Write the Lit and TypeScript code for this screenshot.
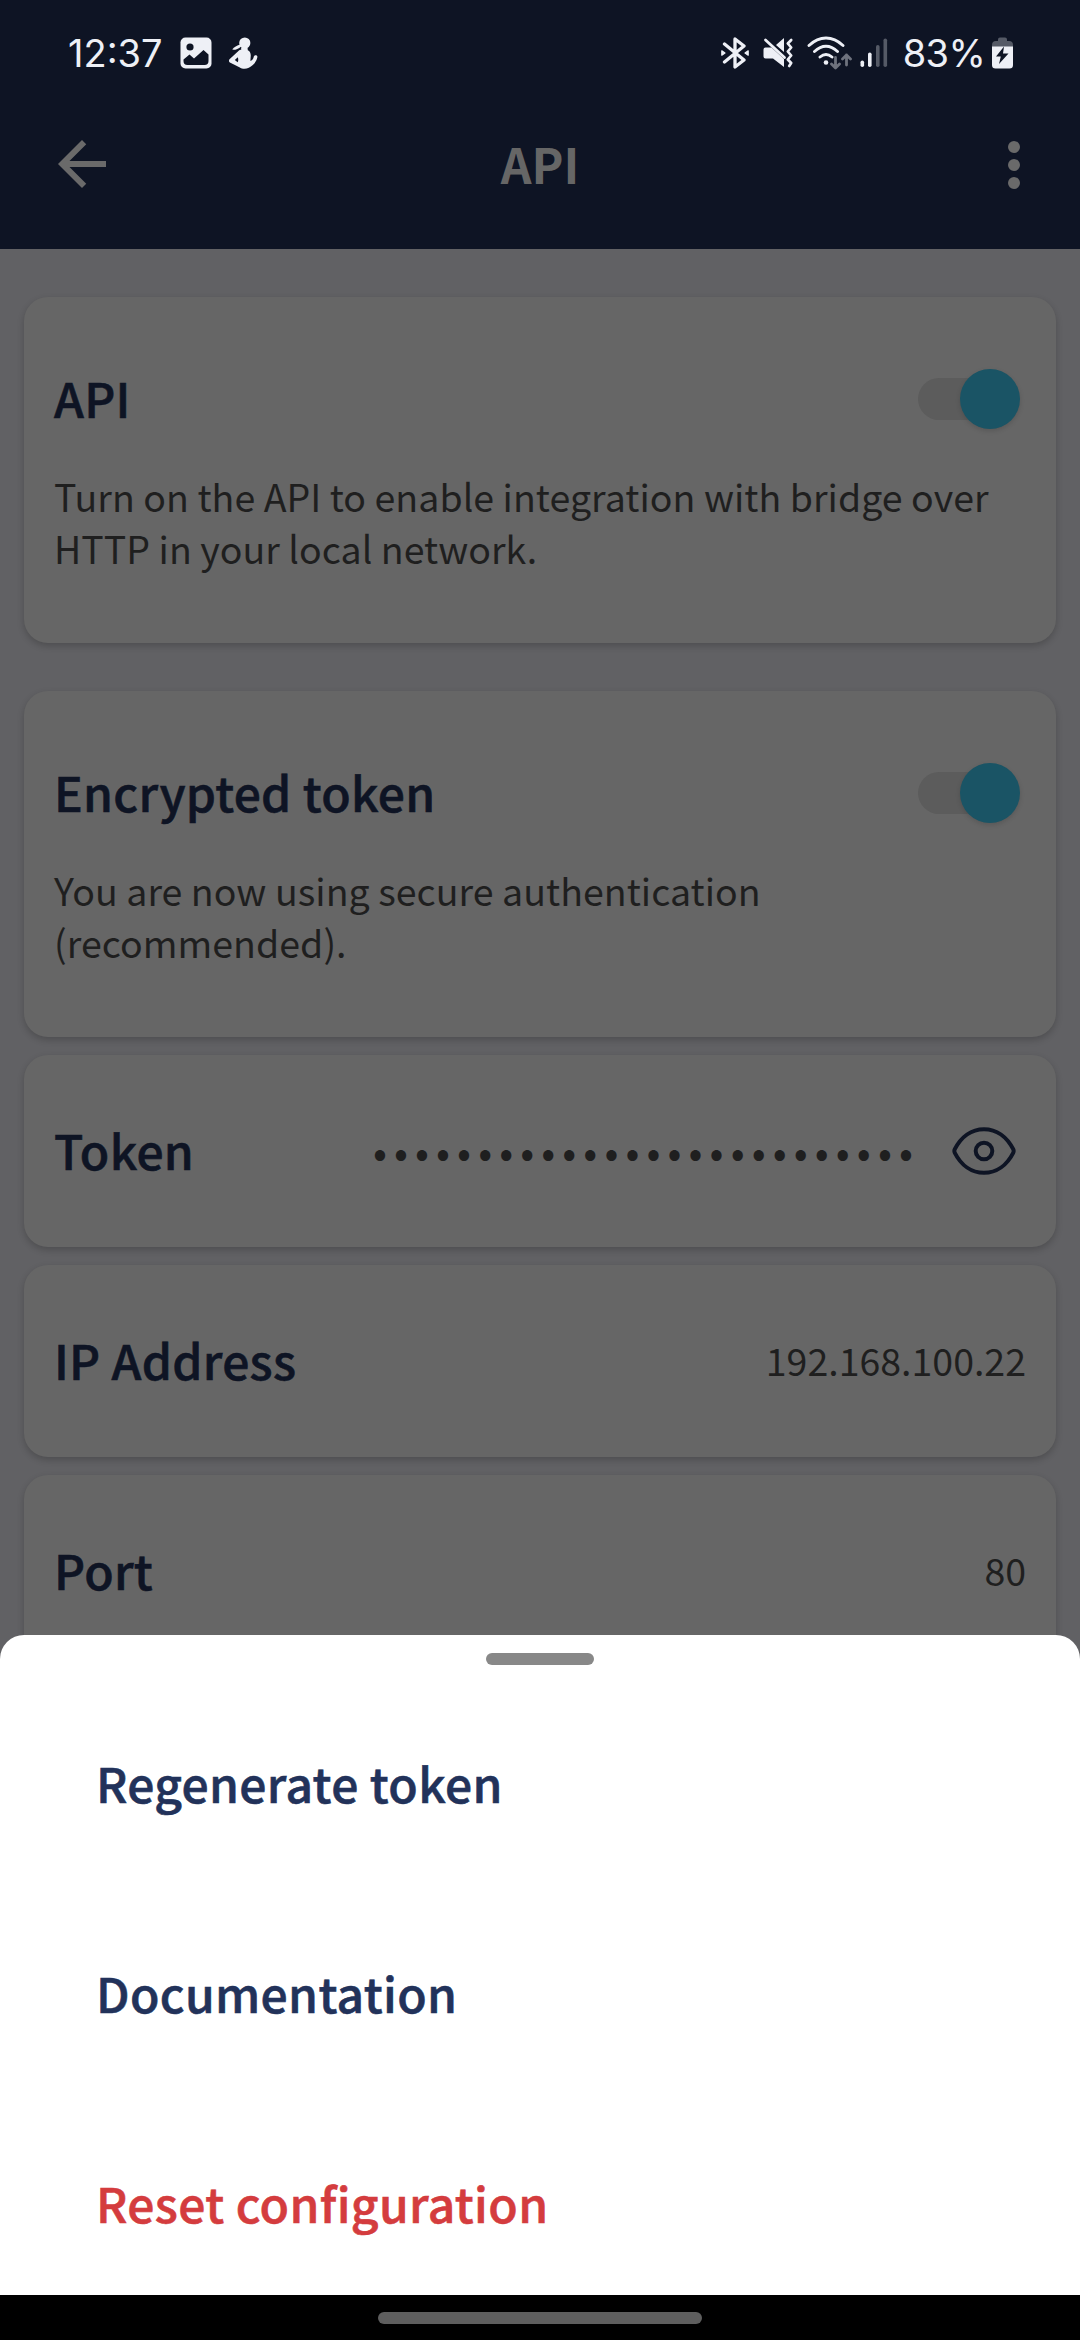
import { LitElement, html, css, nothing } from "lit";
import { customElement, property } from "lit/decorators.js";

/** Android status bar: clock, notification icons, connectivity and battery. */
@customElement("status-bar")
export class StatusBar extends LitElement {
  static styles = css`
    :host {
      display: flex;
      justify-content: space-between;
      height: 106px;
      padding: 0 67px 0 68px;
      color: #eef0f6;
      font: 400 38px/56px Inter, sans-serif;
    }
    .side {
      display: flex;
      align-items: center;
      height: 56px;
      margin-top: 25px;
    }
    .level {
      margin-left: 15px;
      letter-spacing: -0.7px;
    }
    svg {
      display: block;
      flex: none;
    }
    .picture {
      margin-left: 17px;
    }
    .runner {
      margin-left: 17px;
    }
    .mute {
      margin-left: 14px;
    }
    .wifi {
      margin-left: 13px;
    }
    .signal {
      margin-left: 8px;
    }
    .battery {
      margin-left: 7px;
    }
  `;

  render() {
    return html`
      <div class="side">
        <span>12:37</span>
        <svg class="picture" width="32" height="32" viewBox="0 0 32 32">
          <rect x="0.5" y="0.5" width="31" height="31" rx="5" fill="#eef0f6" />
          <circle cx="10" cy="10" r="3.6" fill="#0e1424" />
          <path d="M3.5 22.5 9.5 17.5l4.5 4 9.5-8.5 5 4.5v6.5q0 4-4 4h-17q-4 0-4-4z" fill="#0e1424" />
        </svg>
        <svg class="runner" width="30" height="32" viewBox="0 0 30 32" fill="#eef0f6">
          <circle cx="15.8" cy="6" r="5.6" />
          <path d="M11.5 7.5C8 8.5 5 10 3.2 12.6c2.400.6 6-.6 9-3.200z" />
          <path d="M12 10.500h6.500l.3 2.700c2.200 1 3.200 3.500 2.900 6.300l-.3 4.500c2.200-1 3-2.700 3.400-4.600l.8-.9c1.500-.7 3 .2 2.800 1.500-1 5.200-4.600 8.600-8.600 10.800-3.200 1.400-6.600 1.200-9.400-.6L.9 25.500c-1.200-.9-1.200-2.100-.4-3.200l9.200-8.500c.7-.8 1.700-1 2.600-1.300z" />
          <path d="m8.800 20.200-3 2.900 2.800 2.200c.9-1.500.8-3.400.2-5.100z" fill="#0e1424" />
        </svg>
      </div>
      <div class="side">
        <svg width="28" height="32" viewBox="0 0 28 32" fill="none" stroke="#eef0f6" stroke-width="3.3" stroke-linejoin="round" stroke-linecap="round">
          <path d="M3.500 7 23 23 14 30V2l9 7L3.500 25" />
          <path d="M.8 13.800v4.400L4 16zM27.200 13.800v4.400L24 16z" fill="#eef0f6" stroke-width="1.200" />
        </svg>
        <svg class="mute" width="31" height="32" viewBox="0 0 31 32">
          <path d="M2.500 10.500h6L21 22v8L10 21.500H2.500q-2 0-2-2v-7q0-2 2-2zM13 8l8-7v14z" fill="#eef0f6" />
          <path d="M2.500 3 21.500 20.500" stroke="#eef0f6" stroke-width="2.800" stroke-linecap="round" />
          <path d="m28.200 3-3.400 3.500 3.400 4-3.400 4 3.400 4-3.400 4 3.400 3.500-2 3" fill="none" stroke="#eef0f6" stroke-width="2.700" stroke-linecap="round" stroke-linejoin="round" />
        </svg>
        <svg class="wifi" width="45" height="36" viewBox="0 0 45 36" fill="none" stroke="#eef0f6" stroke-width="2.900" stroke-linecap="round">
          <path d="M2 10.500Q10 3 19 3t17 7.500M7.500 16.500Q13 11.300 19 11.300t11.500 5.200M13 22q6-5 12 0" />
          <circle cx="19" cy="27.500" r="2.300" fill="#eef0f6" stroke="none" />
          <g stroke="#6e727d" stroke-width="2.800" stroke-linejoin="round">
            <path d="M28.500 22.500v10.500m-4-4 4 4 4-4M39.500 30V20m-4 4 4-4 4 4" />
          </g>
        </svg>
        <svg class="signal" width="28" height="32" viewBox="0 0 28 32">
          <rect x="0.500" y="23.500" width="3.600" height="6.500" rx="1.800" fill="#eef0f6" />
          <rect x="8" y="15.500" width="3.600" height="14.500" rx="1.800" fill="#eef0f6" />
          <rect x="16" y="8" width="3.600" height="22" rx="1.800" fill="#555a66" />
          <rect x="23.500" y="1.500" width="3.600" height="28.500" rx="1.800" fill="#555a66" />
        </svg>
        <span class="level">83%</span>
        <svg class="battery" width="21" height="32" viewBox="0 0 21 32">
          <path d="M0 11V8q0-4 4-4h2V2.500Q6 .5 8 .5h5q2 0 2 2V4h2q4 0 4 4v3z" fill="#555a66" />
          <path d="M0 9.500h21V28q0 3.500-3.500 3.500h-14Q0 31.500 0 28z" fill="#eef0f6" />
          <path d="M12 9.500 4 19.500h4.800L7 27l9.500-10.500h-5.500z" fill="#0e1424" />
        </svg>
      </div>
    `;
  }
}

/** Title bar with back and overflow actions. */
@customElement("title-bar")
export class TitleBar extends LitElement {
  static styles = css`
    :host {
      display: flex;
      align-items: center;
      justify-content: space-between;
      height: 118px;
      margin-bottom: 25px;
      padding: 0 30px 0 46px;
      color: #6a6a6a;
    }
    svg {
      display: block;
    }
    .back {
      margin-bottom: 2px;
    }
    h1 {
      margin: 0 0 5px;
      font: 700 48px/60px "Noto Sans CJK JP", "Open Sans", sans-serif;
      color: #666;
      padding-right: 16px;
    }
  `;

  render() {
    return html`
      <svg class="back" width="72" height="72" viewBox="0 0 24 24" fill="currentColor">
        <path d="M20 11H7.830l5.590-5.590L12 4l-8 8 8 8 1.410-1.410L7.830 13H20v-2z" />
      </svg>
      <h1>API</h1>
      <svg width="72" height="72" viewBox="0 0 24 24" fill="currentColor">
        <circle cx="12" cy="6" r="2" />
        <circle cx="12" cy="12" r="2" />
        <circle cx="12" cy="18" r="2" />
      </svg>
    `;
  }
}

/** Card with a heading and either a switch plus description, or a slotted value. */
@customElement("setting-card")
export class SettingCard extends LitElement {
  static styles = css`
    :host {
      display: block;
      box-sizing: border-box;
      border-radius: 24px;
      background: #666;
      box-shadow: 0 3px 7px rgba(0, 0, 0, 0.2);
      font-family: "Noto Sans CJK JP", "Open Sans", sans-serif;
      color: #1f1f1f;
      padding: 66px 30px;
      height: 192px;
    }
    :host([description]) {
      height: 346px;
      padding-top: 72px;
    }
    .row {
      display: flex;
      align-items: center;
      justify-content: space-between;
      height: 60px;
    }
    h2 {
      margin: 0 0 4px;
      font-size: 48px;
      font-weight: 500;
      line-height: 60px;
      letter-spacing: 0.28px;
      color: #0e1424;
      -webkit-text-stroke: 0.6px #0e1424;
    }
    p {
      margin: 41px 0 0;
      font-size: 37.5px;
      line-height: 52px;
      letter-spacing: 0.04px;
    }
    .switch {
      display: flex;
      align-items: center;
      justify-content: flex-end;
      width: 96px;
      height: 42px;
      margin-right: 12px;
      border-radius: 21px;
      background: #5c5c5c;
    }
    .knob {
      flex: none;
      width: 60px;
      height: 60px;
      margin-right: -6px;
      border-radius: 50%;
      background: #1a5465;
      box-shadow: 0 2px 5px rgba(0, 0, 0, 0.14);
    }
  `;

  @property() heading = "";
  @property({ reflect: true }) description?: string;

  render() {
    return html`
      <div class="row">
        <h2>${this.heading}</h2>
        ${this.description ? html`<div class="switch"><div class="knob"></div></div>` : html`<slot></slot>`}
      </div>
      ${this.description ? html`<p>${this.description}</p>` : nothing}
    `;
  }
}

/** Bottom sheet listing the overflow actions. */
@customElement("action-sheet")
export class ActionSheet extends LitElement {
  static styles = css`
    :host {
      display: flex;
      flex-direction: column;
      align-items: center;
      box-sizing: border-box;
      height: 660px;
      padding-top: 18px;
      border-radius: 24px 24px 0 0;
      background: #fff;
    }
    .handle {
      width: 108px;
      height: 12px;
      border-radius: 6px;
      background: #888;
    }
    ul {
      display: flex;
      flex-direction: column;
      gap: 150px;
      align-self: stretch;
      margin: 87px 0 0;
      padding: 0 0 0 96px;
      list-style: none;
      font: 500 48px/60px "Noto Sans CJK JP", "Open Sans", sans-serif;
      letter-spacing: 0.34px;
      color: #22325a;
      -webkit-text-stroke: 0.6px currentColor;
    }
    .danger {
      color: #d43c3e;
    }
  `;

  render() {
    return html`
      <div class="handle"></div>
      <ul>
        <li>Regenerate token</li>
        <li>Documentation</li>
        <li class="danger">Reset configuration</li>
      </ul>
    `;
  }
}

@customElement("app-root")
export class AppRoot extends LitElement {
  static styles = css`
    :host {
      display: block;
      position: relative;
      width: 1080px;
      height: 2340px;
      overflow: hidden;
      background: #616164;
    }
    .top {
      background: #0e1424;
      height: 249px;
    }
    main {
      display: flex;
      flex-direction: column;
      gap: 18px;
      padding: 48px 24px 0;
    }
    .spaced {
      margin-bottom: 30px;
    }
    .value {
      margin-bottom: 2px;
      font-size: 37.5px;
      line-height: 52px;
    }
    .secret {
      display: flex;
      align-items: center;
      gap: 32px;
      margin-right: 10px;
    }
    .dots {
      margin-bottom: 3px;
      font-size: 41px;
      line-height: 52px;
      letter-spacing: 7.1px;
      white-space: nowrap;
    }
    .overlay {
      position: absolute;
      left: 0;
      right: 0;
      bottom: 0;
    }
    .nav {
      display: flex;
      justify-content: center;
      height: 28px;
      padding-top: 17px;
      background: #000;
    }
    .pill {
      width: 324px;
      height: 12px;
      border-radius: 6px;
      background: #5e5e5e;
    }
  `;

  render() {
    return html`
      <div class="top">
        <status-bar></status-bar>
        <title-bar></title-bar>
      </div>
      <main>
        <setting-card
          class="spaced"
          heading="API"
          description="Turn on the API to enable integration with bridge over HTTP in your local network."
        ></setting-card>
        <setting-card
          heading="Encrypted token"
          description="You are now using secure authentication (recommended)."
        ></setting-card>
        <setting-card heading="Token">
          <div class="secret">
            <span class="dots">${"•".repeat(26)}</span>
            <svg width="64" height="48" viewBox="0 0 64 48" fill="none" stroke="#0e1424" stroke-width="4">
              <path d="M2.800 22.200C9 10 19.500 2.200 32 2.200S55 10 61.200 22.200q.9 1.800 0 3.600C55 38 44.500 45.800 32 45.800S9 38 2.800 25.800q-.9-1.800 0-3.600z" />
              <circle cx="32" cy="24" r="8.300" />
            </svg>
          </div>
        </setting-card>
        <setting-card heading="IP Address"><span class="value">192.168.100.22</span></setting-card>
        <setting-card heading="Port"><span class="value">80</span></setting-card>
      </main>
      <div class="overlay">
        <action-sheet></action-sheet>
        <div class="nav"><div class="pill"></div></div>
      </div>
    `;
  }
}
